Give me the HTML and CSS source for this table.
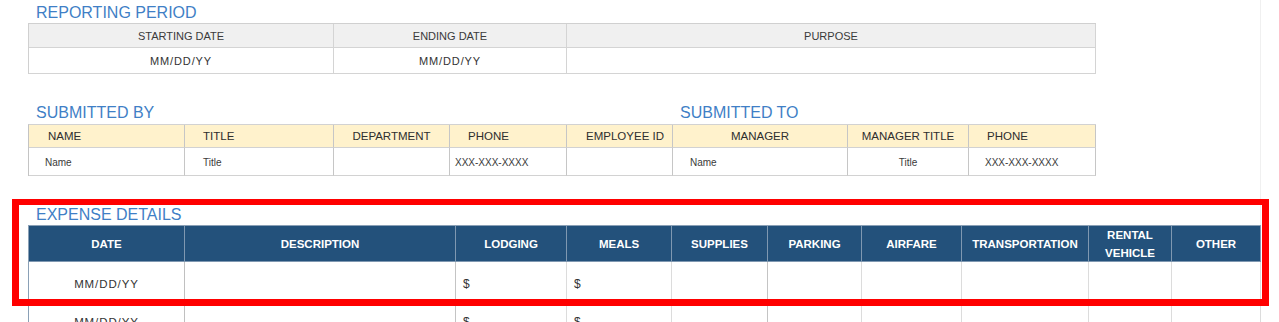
FILE: index.html
```html
<!DOCTYPE html>
<html lang="en">
<head>
<meta charset="utf-8">
<title>Expense Report</title>
<link rel="stylesheet" href="styles.css">
</head>
<body>
<div class="page">
  <section class="sec sec-first">
    <h2 class="title">REPORTING PERIOD</h2>
    <div class="grid g-period">
      <div class="c h1 ctr">STARTING DATE</div>
      <div class="c h1 ctr">ENDING DATE</div>
      <div class="c h1 ctr">PURPOSE</div>
      <div class="c d1 ctr date">MM/DD/YY</div>
      <div class="c d1 ctr date">MM/DD/YY</div>
      <div class="c d1"></div>
    </div>
  </section>

  <section class="sec">
    <div class="title-row">
      <h2 class="title">SUBMITTED BY</h2>
      <h2 class="title">SUBMITTED TO</h2>
    </div>
    <div class="grid g-sub">
      <div class="c h2 pl19">NAME</div>
      <div class="c h2 pl18">TITLE</div>
      <div class="c h2 ctr">DEPARTMENT</div>
      <div class="c h2 pl18">PHONE</div>
      <div class="c h2 rt">EMPLOYEE ID</div>
      <div class="c h2 ctr">MANAGER</div>
      <div class="c h2 ctr">MANAGER TITLE</div>
      <div class="c h2 pl18">PHONE</div>
      <div class="c d2 pl16">Name</div>
      <div class="c d2 pl18">Title</div>
      <div class="c d2"></div>
      <div class="c d2 pl6">XXX-XXX-XXXX</div>
      <div class="c d2"></div>
      <div class="c d2 pl17">Name</div>
      <div class="c d2 ctr">Title</div>
      <div class="c d2 pl16">XXX-XXX-XXXX</div>
    </div>
  </section>

  <section class="sec">
    <h2 class="title">EXPENSE DETAILS</h2>
    <div class="grid g-exp">
      <div class="c h3">DATE</div>
      <div class="c h3">DESCRIPTION</div>
      <div class="c h3">LODGING</div>
      <div class="c h3">MEALS</div>
      <div class="c h3">SUPPLIES</div>
      <div class="c h3">PARKING</div>
      <div class="c h3">AIRFARE</div>
      <div class="c h3">TRANSPORTATION</div>
      <div class="c h3 two">RENTAL<br>VEHICLE</div>
      <div class="c h3">OTHER</div>

      <div class="c d3 ctr date">MM/DD/YY</div>
      <div class="c d3 dk"></div>
      <div class="c d3 money">$</div>
      <div class="c d3 money">$</div>
      <div class="c d3 dk"></div>
      <div class="c d3"></div>
      <div class="c d3"></div>
      <div class="c d3"></div>
      <div class="c d3"></div>
      <div class="c d3"></div>

      <div class="c d3 ctr date">MM/DD/YY</div>
      <div class="c d3 dk"></div>
      <div class="c d3 money">$</div>
      <div class="c d3 money">$</div>
      <div class="c d3 dk"></div>
      <div class="c d3"></div>
      <div class="c d3"></div>
      <div class="c d3"></div>
      <div class="c d3"></div>
      <div class="c d3"></div>
    </div>
  </section>

  <div class="highlight"></div>
</div>
</body>
</html>
```

FILE: styles.css
```css
html, body {
  margin: 0;
  padding: 0;
  background: #ffffff;
}

body {
  font-family: "Liberation Sans", Arial, sans-serif;
  color: #333333;
  width: 1279px;
  height: 322px;
  overflow: hidden;
}

.page {
  position: relative;
  box-sizing: border-box;
  width: 1261px;
  height: 322px;
  padding: 3px 0 0 28px;
  border-right: 1px solid #f0f0f0;
}

.sec {
  margin-top: 29px;
}

.sec-first {
  margin-top: 0;
}

.title {
  margin: 0;
  padding-left: 8px;
  height: 20px;
  line-height: 20px;
  font-size: 16px;
  font-weight: normal;
  color: #3f7fc6;
  white-space: nowrap;
}

.title-row {
  display: grid;
  grid-template-columns: 644px auto;
  margin-bottom: 1px;
}

.grid {
  display: grid;
  width: max-content;
}

.c {
  box-sizing: border-box;
  border-right: 1px solid #d4d4d4;
  border-bottom: 1px solid #d4d4d4;
  font-size: 11px;
  white-space: nowrap;
  display: flex;
  align-items: center;
  overflow: hidden;
}

.ctr { justify-content: center; }
.rt { justify-content: flex-end; padding-right: 8px; }
.pl6 { padding-left: 5px; }
.pl16 { padding-left: 16px; }
.pl17 { padding-left: 17px; }
.pl18 { padding-left: 18px; }
.pl19 { padding-left: 19px; }

/* Reporting period */
.g-period {
  grid-template-columns: 305px 233px 529px;
  grid-template-rows: 24px 26px;
  border-top: 1px solid #d0d0d0;
  border-left: 1px solid #d0d0d0;
}

.h1 {
  background: #f0f0f0;
  color: #3a3a3a;
}

.date {
  font-size: 11px;
  letter-spacing: 0.9px;
  color: #333333;
}

/* Submitted */
.g-sub {
  grid-template-columns: 156px 149px 116px 117px 106px 175px 121px 127px;
  grid-template-rows: 23px 28px;
  border-top: 1px solid #d2d2d2;
  border-left: 1px solid #c4c4c4;
}

.g-sub .c {
  border-right-color: #c6c6c6;
  border-bottom-color: #d2d2d2;
}

.h2 {
  background: #fff2cc;
  color: #2e2e2e;
  font-size: 11.5px;
}

.d2 {
  font-size: 10px;
  color: #3a3a3a;
  padding-top: 1px;
}

/* Expense details */
.g-exp {
  grid-template-columns: 156px 271px 111px 105px 96px 94px 100px 127px 83px 89px;
  grid-template-rows: 36px 38px 38px;
  border-top: 1px solid #8aa0b6;
  border-left: 1px solid #8aa0b6;
}

.h3 {
  background: #23517b;
  color: #ffffff;
  font-weight: bold;
  font-size: 11.5px;
  justify-content: center;
  text-align: center;
  border-right-color: #7f98b1;
  border-bottom-color: #7f98b1;
}

.h3.two {
  line-height: 18px;
  padding-top: 1px;
}

.d3 {
  border-right-color: #dcdcdc;
  border-bottom-color: #dcdcdc;
  padding-top: 6px;
  font-size: 12px;
}

.d3.date {
  font-size: 11.5px;
  letter-spacing: 0.9px;
}

.g-exp .d3.ctr {
  border-right-color: #c0c0c0;
}

.d3.dk {
  border-right-color: #c4c4c4;
}

.money {
  padding-left: 7px;
}

/* Red annotation frame laid over the expense section */
.highlight {
  position: absolute;
  left: 12px;
  top: 199px;
  width: 1257px;
  height: 107px;
  box-sizing: border-box;
  border: 7px solid #ff0000;
  border-top-width: 6px;
  pointer-events: none;
}
```
